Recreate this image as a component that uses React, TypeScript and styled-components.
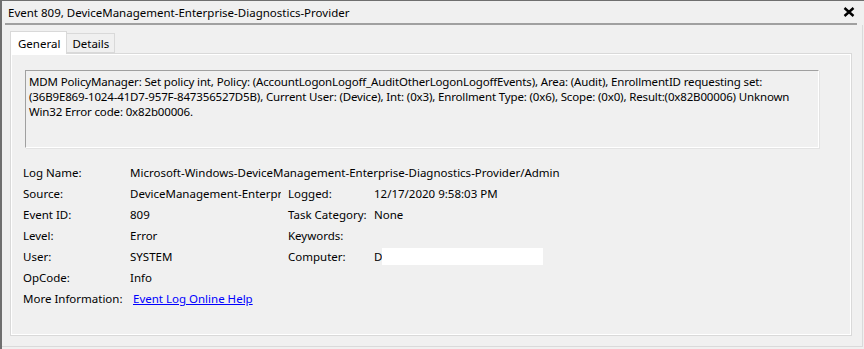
import styled, { createGlobalStyle } from 'styled-components';

const GlobalStyle = createGlobalStyle`
  html, body {
    margin: 0;
    padding: 0;
    background: #f0f0f0;
  }
  body {
    font-family: "Noto Sans", "Open Sans", sans-serif;
    font-size: 11.5px;
    color: #000;
  }
`;

const Window = styled.div`
  width: 864px;
  height: 349px;
  box-sizing: border-box;
  display: flex;
  flex-direction: column;
  background: #f0f0f0;
  border-top: 1px solid #6f6f6f;
  border-left: 2px solid #6f6f6f;
`;

const TitleBar = styled.div`
  height: 22px;
  display: flex;
  align-items: center;
  justify-content: space-between;
  padding: 0 8px 0 6px;
  white-space: nowrap;
`;

const CloseButton = styled.button`
  border: 0;
  background: none;
  padding: 0;
  width: 14px;
  height: 14px;
  display: flex;
  align-items: center;
  justify-content: center;
  cursor: pointer;
`;

const Separator = styled.div`
  height: 2px;
  margin: 0 7px 0 3px;
  background: #a0a0a0;
`;

const Body = styled.div`
  flex: 1;
  display: flex;
  flex-direction: column;
  padding: 6px 10px 10px 8px;
  margin-right: 1px;
  margin-bottom: 2px;
  border-right: 1px solid #dadada;
  border-bottom: 1px solid #dadada;
`;

const TabStrip = styled.div`
  display: flex;
  align-items: flex-start;
  height: 22px;
  position: relative;
  z-index: 1;
`;

const Tab = styled.div<{ $active?: boolean }>`
  box-sizing: border-box;
  height: ${({ $active }) => ($active ? '23px' : '20px')};
  margin-top: ${({ $active }) => ($active ? '0' : '2px')};
  margin-left: ${({ $active }) => ($active ? '0' : '-1px')};
  padding: ${({ $active }) => ($active ? '0 6px 0 7px' : '0 5px 0 5px')};
  display: flex;
  align-items: center;
  border: 1px solid #d9d9d9;
  border-bottom: ${({ $active }) => ($active ? 'none' : '1px solid #d9d9d9')};
  background: ${({ $active }) => ($active ? '#ffffff' : '#f0f0f0')};
`;

const Panel = styled.div`
  flex: 1;
  display: flex;
  flex-direction: column;
  border: 1px solid #d9d9d9;
  box-shadow: inset 1px 1px 0 #ffffff, inset -1px -1px 0 #ffffff;
  padding: 16px 32px 0 14px;
`;

const MessageBox = styled.div`
  height: 78px;
  box-sizing: border-box;
  overflow: hidden;
  border: 1px solid;
  border-color: #a0a0a0 #ffffff #ffffff #a0a0a0;
  box-shadow: 1px 1px 0 #e3e3e3;
  padding: 3px 4px 0 3px;
  line-height: 15px;
  letter-spacing: -0.15px;
  white-space: nowrap;
`;

const Details = styled.div`
  display: grid;
  grid-template-columns: 107px 158px 86px 1fr;
  grid-auto-rows: 21px;
  margin-top: 14px;
  margin-left: -2px;
  align-items: center;
  white-space: nowrap;
`;

const Label = styled.div``;

const Value = styled.div<{ $span?: number }>`
  grid-column: span ${({ $span }) => $span ?? 1};
  overflow: hidden;
  text-overflow: clip;
  display: flex;
  align-items: center;
  margin-right: ${({ $span }) => ($span ? '0' : '7px')};
`;

const Redacted = styled.span`
  display: inline-block;
  flex: none;
  width: 161px;
  height: 17px;
  background: #ffffff;
`;

const HelpLink = styled.a`
  margin-left: 3px;
  color: #0000ff;
  text-decoration: underline;
`;

export default function App() {
  return (
    <>
      <GlobalStyle />
      <Window>
        <TitleBar>
          <span>Event 809, DeviceManagement-Enterprise-Diagnostics-Provider</span>
          <CloseButton aria-label="Close">
            <svg width="12" height="10" viewBox="0 0 12 10">
              <path d="M1.5 1 L10.5 9 M10.5 1 L1.5 9" stroke="#000" strokeWidth="2.4" />
            </svg>
          </CloseButton>
        </TitleBar>
        <Separator />
        <Body>
          <TabStrip>
            <Tab $active>General</Tab>
            <Tab>Details</Tab>
          </TabStrip>
          <Panel>
            <MessageBox>
              MDM PolicyManager: Set policy int, Policy: (AccountLogonLogoff_AuditOtherLogonLogoffEvents), Area: (Audit), EnrollmentID requesting set:
              <br />
              (36B9E869-1024-41D7-957F-847356527D5B), Current User: (Device), Int: (0x3), Enrollment Type: (0x6), Scope: (0x0), Result:(0x82B00006) Unknown
              <br />
              Win32 Error code: 0x82b00006.
            </MessageBox>
            <Details>
              <Label>Log Name:</Label>
              <Value $span={3}>Microsoft-Windows-DeviceManagement-Enterprise-Diagnostics-Provider/Admin</Value>

              <Label>Source:</Label>
              <Value>DeviceManagement-Enterprise-Diagnostics-Provider</Value>
              <Label>Logged:</Label>
              <Value>12/17/2020 9:58:03 PM</Value>

              <Label>Event ID:</Label>
              <Value>809</Value>
              <Label>Task Category:</Label>
              <Value>None</Value>

              <Label>Level:</Label>
              <Value>Error</Value>
              <Label>Keywords:</Label>
              <Value />

              <Label>User:</Label>
              <Value>SYSTEM</Value>
              <Label>Computer:</Label>
              <Value>D<Redacted /></Value>

              <Label>OpCode:</Label>
              <Value $span={3}>Info</Value>

              <Label>More Information:</Label>
              <Value $span={3}>
                <HelpLink href="#">Event Log Online Help</HelpLink>
              </Value>
            </Details>
          </Panel>
        </Body>
      </Window>
    </>
  );
}
